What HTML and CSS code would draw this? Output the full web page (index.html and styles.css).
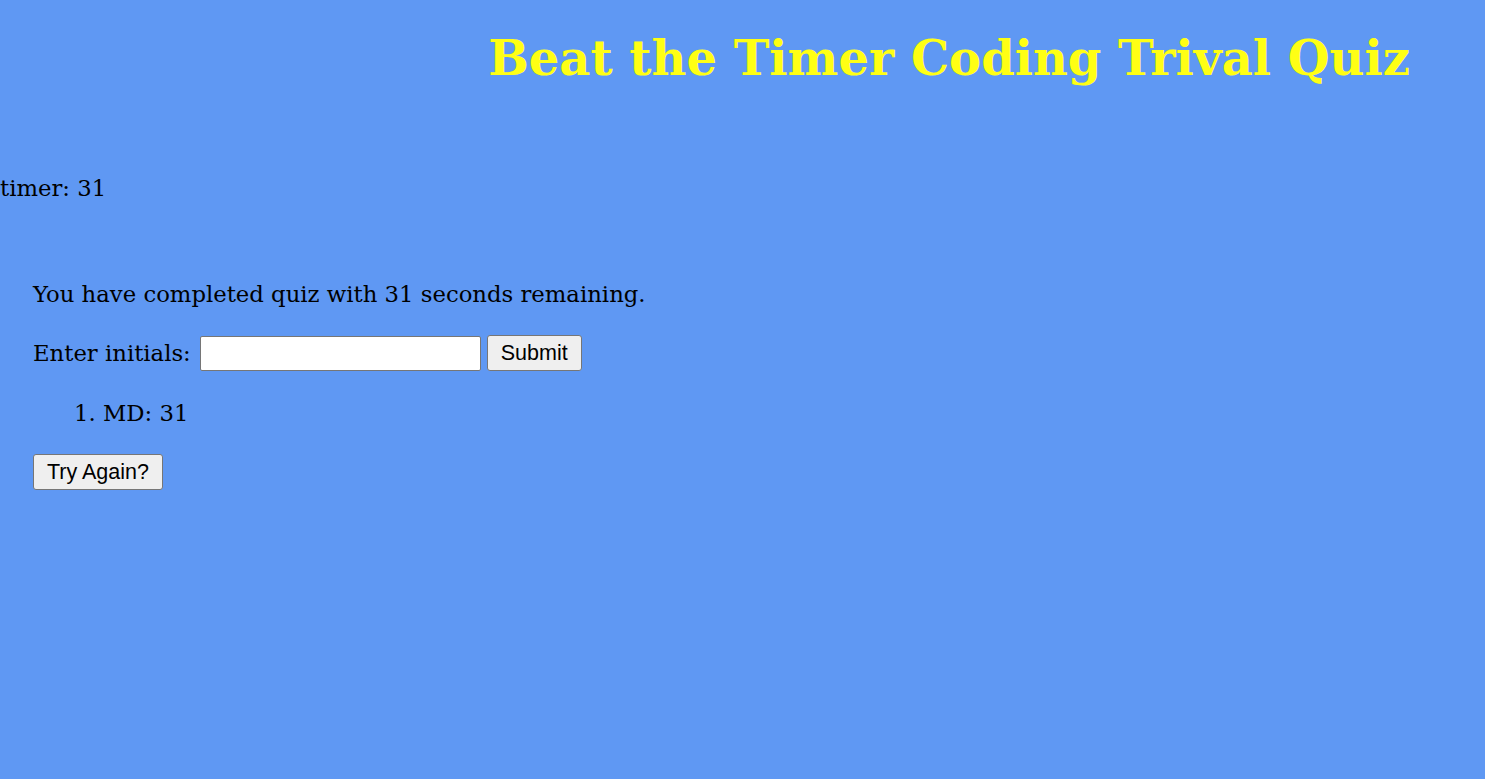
FILE: index.html
```html
<!DOCTYPE html>
<html>
<head>
<meta charset="utf-8">
<title>Beat the Timer Coding Trival Quiz</title>
<link rel="stylesheet" href="styles.css">
</head>
<body>
<header class="top">
  <h1 class="title">Beat the Timer Coding Trival Quiz</h1>
</header>
<div class="timer">timer: 31</div>
<section class="done">
  <p class="msg">You have completed quiz with 31 seconds remaining.</p>
  <form class="entry">
    <label class="lbl" for="ini">Enter initials:</label>
    <input class="field" id="ini" type="text">
    <button class="btn" type="button">Submit</button>
  </form>
  <ol class="scores">
    <li>MD: 31</li>
  </ol>
  <button class="btn" type="button">Try Again?</button>
</section>
</body>
</html>
```
FILE: styles.css
```css
html, body {
  margin: 0;
  padding: 0;
}
body {
  background: #5f98f3;
  font-family: "DejaVu Serif", Georgia, serif;
  color: #000;
  min-height: 779px;
}
.top {
  display: flex;
  justify-content: flex-end;
  padding: 26px 75px 0 0;
}
.title {
  margin: 0;
  font-size: 48px;
  line-height: 64px;
  font-weight: bold;
  color: #ffff14;
}
.timer {
  margin-top: 84px;
  font-size: 22.75px;
  line-height: 28px;
}
.done {
  padding: 78px 0 0 33px;
}
.msg {
  margin: 0 0 27px 0;
  font-size: 22.75px;
  line-height: 28px;
}
.entry {
  display: flex;
  align-items: center;
  gap: 6px;
  font-size: 22.75px;
}
.lbl {
  margin-right: 3px;
}
.field {
  width: 281px;
  height: 35px;
  box-sizing: border-box;
  border: 1px solid #767676;
  border-radius: 2px;
  background: #fff;
  margin: 0;
}
.btn {
  font-family: "Liberation Sans", Arial, sans-serif;
  font-size: 21.5px;
  height: 36px;
  padding: 0 13px;
  background: #efefef;
  border: 1px solid #767676;
  border-radius: 3px;
  color: #000;
  margin: 0;
}
.scores {
  margin: 28px 0 27px 0;
  padding-left: 70px;
  font-size: 22.75px;
  line-height: 28px;
}
```
